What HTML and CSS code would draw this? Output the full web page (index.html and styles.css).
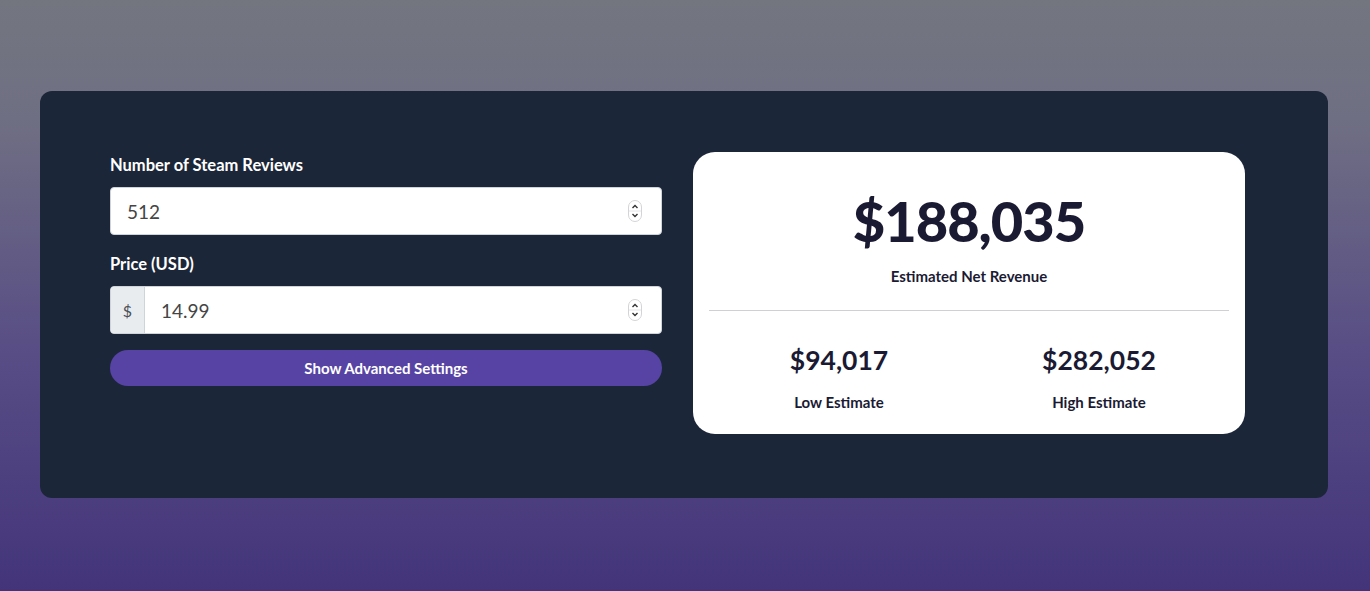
FILE: index.html
```html
<!DOCTYPE html>
<html lang="en">
<head>
    <meta charset="UTF-8">
    <meta name="viewport" content="width=device-width, initial-scale=1.0">
    <title>Steam Revenue Calculator</title>

    <link rel="stylesheet" href="styles.css">
</head>
<body>

    <div class="panel">
        <!-- Inputs -->
        <div class="inputs">
            <label class="field-label" for="reviews">Number of Steam Reviews</label>
            <div class="field">
                <input type="text" id="reviews" value="512">
                <span class="spinner">
                    <svg width="14" height="22" viewBox="0 0 14 22">
                        <rect x="0.5" y="0.5" width="13" height="21" rx="6.5" fill="#fff" stroke="#d4d4d8"/>
                        <line x1="1" y1="11" x2="13" y2="11" stroke="#e4e4e7"/>
                        <path d="M4.5 8 L7 5.5 L9.5 8" fill="none" stroke="#333" stroke-width="1.4"/>
                        <path d="M4.5 14 L7 16.5 L9.5 14" fill="none" stroke="#333" stroke-width="1.4"/>
                    </svg>
                </span>
            </div>

            <label class="field-label" for="price">Price (USD)</label>
            <div class="field">
                <span class="prefix">$</span>
                <input type="text" id="price" value="14.99">
                <span class="spinner">
                    <svg width="14" height="22" viewBox="0 0 14 22">
                        <rect x="0.5" y="0.5" width="13" height="21" rx="6.5" fill="#fff" stroke="#d4d4d8"/>
                        <line x1="1" y1="11" x2="13" y2="11" stroke="#e4e4e7"/>
                        <path d="M4.5 8 L7 5.5 L9.5 8" fill="none" stroke="#333" stroke-width="1.4"/>
                        <path d="M4.5 14 L7 16.5 L9.5 14" fill="none" stroke="#333" stroke-width="1.4"/>
                    </svg>
                </span>
            </div>

            <button class="advanced">Show Advanced Settings</button>
        </div>

        <!-- Results -->
        <div class="results">
            <div class="total">$188,035</div>
            <div class="caption">Estimated Net Revenue</div>
            <hr>
            <div class="range">
                <div>
                    <div class="amount">$94,017</div>
                    <div class="caption">Low Estimate</div>
                </div>
                <div>
                    <div class="amount">$282,052</div>
                    <div class="caption">High Estimate</div>
                </div>
            </div>
        </div>
    </div>

</body>
</html>
```

FILE: styles.css
```css
/* Page background */
body {
    margin: 0;
    padding: 91px 42px 0 40px;
    height: 591px;
    box-sizing: border-box;
    background: linear-gradient(180deg, #73767f 0%, #6f6f83 20%, #584d85 60%, #43347a 100%);
    font-family: Lato, "Open Sans", sans-serif;
}

/* Dark panel */
.panel {
    background: #1c2639;
    border-radius: 12px;
    height: 407px;
    box-sizing: border-box;
    padding: 61px 83px 0 70px;
    display: grid;
    grid-template-columns: 552px 552px;
    column-gap: 31px;
    align-items: start;
}

/* Left column */
.inputs {
    display: flex;
    flex-direction: column;
}

.field-label {
    color: #fff;
    font-size: 16.5px;
    font-weight: 700;
    line-height: 20px;
    margin: 3px 0 12px;
}

.field-label + .field + .field-label {
    margin-top: 19px;
}

.field {
    display: flex;
    align-items: center;
    height: 48px;
    box-sizing: border-box;
    background: #fff;
    border: 1px solid #ced4da;
    border-radius: 4px;
    overflow: hidden;
}

.field input {
    flex: 1;
    border: none;
    outline: none;
    height: 100%;
    padding: 0 16px;
    font-family: Lato, "Open Sans", sans-serif;
    font-size: 19px;
    color: #454545;
    background: transparent;
}

.prefix {
    width: 33px;
    height: 100%;
    display: flex;
    align-items: center;
    justify-content: center;
    background: #e9ecef;
    border-right: 1px solid #ced4da;
    color: #495057;
    font-size: 16px;
}

.spinner {
    display: flex;
    margin-right: 19px;
}

.advanced {
    margin-top: 16px;
    height: 36px;
    border: none;
    border-radius: 18px;
    background: #5643a4;
    color: #fff;
    font-family: Lato, "Open Sans", sans-serif;
    font-size: 15px;
    font-weight: 700;
    cursor: pointer;
}

/* Right column */
.results {
    background: #fff;
    border-radius: 22px;
    height: 282px;
    box-sizing: border-box;
    padding: 36px 16px 0;
    text-align: center;
    color: #1b1a33;
}

.total {
    font-size: 56px;
    font-weight: 900;
    line-height: 66px;
    letter-spacing: -1px;
}

.caption {
    font-size: 15px;
    font-weight: 700;
    line-height: 20px;
}

.results > .caption {
    margin-top: 12px;
}

hr {
    border: none;
    border-top: 1px solid #cfcfd4;
    margin: 24px 0 0;
}

.range {
    display: grid;
    grid-template-columns: 1fr 1fr;
    padding-top: 32px;
}

.amount {
    font-size: 26.5px;
    font-weight: 700;
    line-height: 34px;
    margin-bottom: 15px;
}
```
